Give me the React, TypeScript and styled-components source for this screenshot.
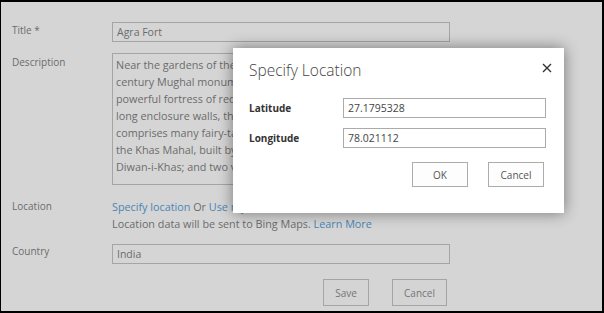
import { createGlobalStyle, styled } from "styled-components"

const Global = createGlobalStyle`
  html, body {
    margin: 0;
    padding: 0;
    background: #ffffff;
  }
  body {
    font-family: "Open Sans", "Noto Sans", sans-serif;
    font-size: 10px;
  }
`

const Frame = styled.div`
  position: relative;
  box-sizing: border-box;
  width: 604px;
  height: 313px;
  border: solid #000;
  border-width: 2px 2px 2px 1px;
  overflow: hidden;
  background: #fff;
`

const Form = styled.div`
  display: flex;
  flex-direction: column;
  padding: 20px 0 0 11px;
  color: #444;
`

const Row = styled.div<{ $gap: number }>`
  display: grid;
  grid-template-columns: 100px 338px;
  margin-top: ${p => p.$gap}px;
`

const Label = styled.div<{ $top?: number }>`
  padding-top: ${p => p.$top ?? 0}px;
  line-height: 14px;
  color: #444;
`

const Input = styled.div`
  box-sizing: border-box;
  height: 20px;
  border: 1px solid #ababab;
  padding: 0 4px;
  line-height: 18px;
  font-size: 10.5px;
  color: #444;
  background: #fff;
`

const TextArea = styled.div`
  box-sizing: border-box;
  height: 132px;
  border: 1px solid #ababab;
  padding: 2px 3px;
  overflow: hidden;
  background: #fff;
`

const Line = styled.div`
  white-space: nowrap;
  line-height: 17px;
  font-size: 10.8px;
  color: #444;
`

const Link = styled.a`
  color: #0072c6;
  text-decoration: none;
`

const Buttons = styled.div<{ $gap: number }>`
  display: flex;
  justify-content: flex-end;
  gap: ${p => p.$gap}px;
`

const Button = styled.button<{ $w: number; $h: number }>`
  box-sizing: border-box;
  width: ${p => p.$w}px;
  height: ${p => p.$h}px;
  border: 1px solid #ababab;
  background: #fdfdfd;
  font-family: inherit;
  font-size: 10px;
  color: #555;
  padding: 0;
`

const FormButtons = styled(Buttons)`
  width: 435px;
  margin-top: 15px;
`

const Overlay = styled.div`
  position: absolute;
  inset: 0;
  background: rgba(157, 157, 157, 0.43);
`

const Dialog = styled.div`
  position: absolute;
  left: 232px;
  top: 46px;
  width: 331px;
  height: 165px;
  box-sizing: border-box;
  background: #fff;
  box-shadow: 0 0 14px rgba(0, 0, 0, 0.45);
  padding: 11px 18px 0 16px;
  display: flex;
  flex-direction: column;
`

const DialogHead = styled.div`
  display: flex;
  justify-content: space-between;
  align-items: flex-start;
`

const DialogTitle = styled.div`
  font-size: 15.5px;
  font-weight: 300;
  line-height: 22px;
  color: #444;
`

const Close = styled.svg`
  margin-top: 4px;
  margin-right: -6px;
`

const Field = styled.div<{ $gap: number }>`
  display: grid;
  grid-template-columns: 94px 1fr;
  align-items: center;
  margin-top: ${p => p.$gap}px;
`

const FieldLabel = styled.div`
  font-weight: 700;
  font-size: 10px;
  color: #333;
`

const DialogButtons = styled(Buttons)`
  margin-top: 14px;
  margin-right: 2px;
`

const lines = [
  "Near the gardens of the Taj Mahal stands the important 16th-",
  "century Mughal monument known as the Red Fort of Agra. This",
  "powerful fortress of red sandstone encompasses, within its 2.5-km-",
  "long enclosure walls, the imperial city of the Mughal rulers. It",
  "comprises many fairy-tale palaces, such as the Jahangir Palace and",
  "the Khas Mahal, built by Shah Jahan; audience halls, such as the",
  "Diwan-i-Khas; and two very beautiful mosques.",
]

export default function App() {
  return (
    <Frame>
      <Global />
      <Form>
        <Row $gap={0}>
          <Label $top={1}>Title *</Label>
          <Input>Agra Fort</Input>
        </Row>
        <Row $gap={11}>
          <Label $top={2}>Description</Label>
          <TextArea>
            {lines.map(l => <Line key={l}>{l}</Line>)}
          </TextArea>
        </Row>
        <Row $gap={13}>
          <Label $top={1}>Location</Label>
          <div>
            <Line><Link href="#">Specify location</Link> Or <Link href="#">Use my location</Link></Line>
            <Line>Location data will be sent to Bing Maps. <Link href="#">Learn More</Link></Line>
          </div>
        </Row>
        <Row $gap={12}>
          <Label>Country</Label>
          <Input>India</Input>
        </Row>
        <FormButtons $gap={23}>
          <Button $w={46} $h={27}>Save</Button>
          <Button $w={55} $h={27}>Cancel</Button>
        </FormButtons>
      </Form>
      <Overlay />
      <Dialog>
        <DialogHead>
          <DialogTitle>Specify Location</DialogTitle>
          <Close width="10" height="10" viewBox="0 0 10 10">
            <path d="M1 1L9 9M9 1L1 9" stroke="#333" strokeWidth="1.4" />
          </Close>
        </DialogHead>
        <Field $gap={17}>
          <FieldLabel>Latitude</FieldLabel>
          <Input>27.1795328</Input>
        </Field>
        <Field $gap={10}>
          <FieldLabel>Longitude</FieldLabel>
          <Input>78.021112</Input>
        </Field>
        <DialogButtons $gap={20}>
          <Button $w={56} $h={25}>OK</Button>
          <Button $w={56} $h={25}>Cancel</Button>
        </DialogButtons>
      </Dialog>
    </Frame>
  )
}
